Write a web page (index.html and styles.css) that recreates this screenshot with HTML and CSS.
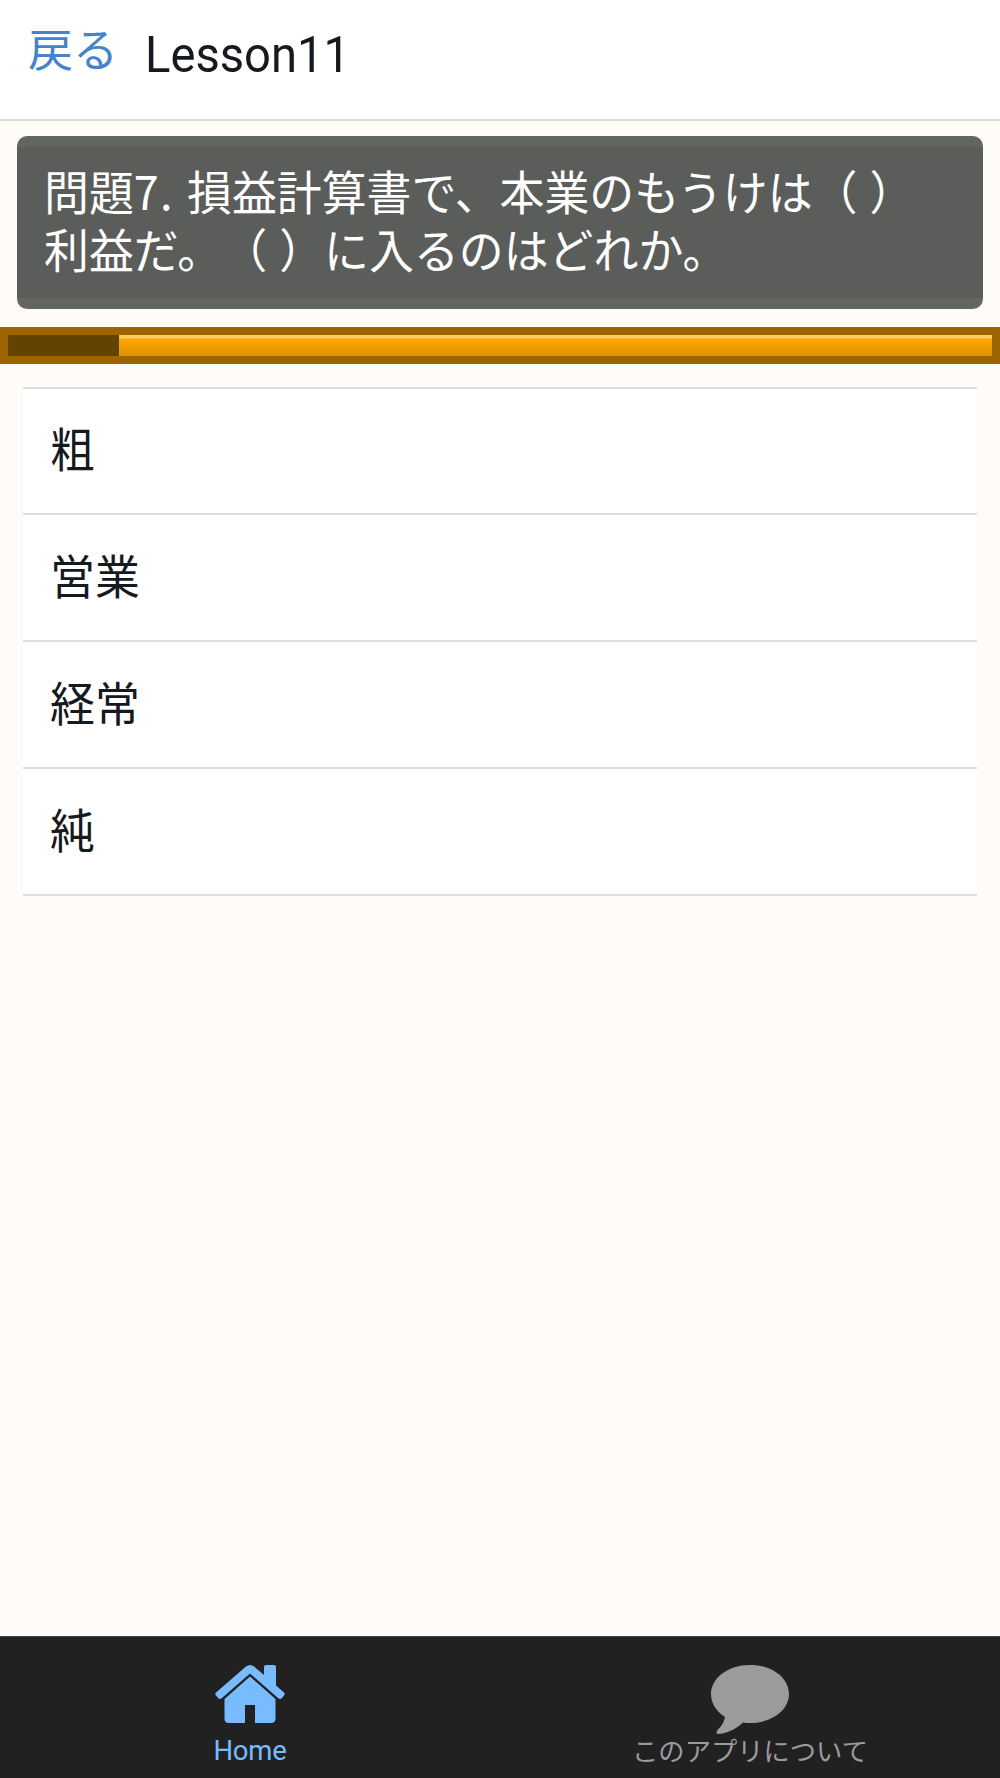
FILE: index.html
```
<!DOCTYPE html>
<html lang="ja">
<head>
<meta charset="utf-8">
<title>Lesson11</title>
<link rel="stylesheet" href="styles.css">
</head>
<body>
<header class="header">
  <a class="back">戻る</a>
  <h1 class="title">Lesson11</h1>
</header>
<main class="main">
  <section class="question">
    <p class="question-text">問題<span class="number">7. </span>損益計算書で、本業のもうけは（ ）<br>利益だ。（ ）に入るのはどれか。</p>
  </section>
  <div class="progress"><div class="track"><div class="elapsed"></div><div class="remaining"></div></div></div>
  <ul class="answers">
    <li class="answer"><span>粗</span></li>
    <li class="answer"><span>営業</span></li>
    <li class="answer"><span>経常</span></li>
    <li class="answer"><span>純</span></li>
  </ul>
</main>
<nav class="tabs">
  <a class="tab active">
    <svg class="icon" viewBox="0 0 70 70" width="70" height="70">
      <path d="M1 27.500 L31 1.500 Q35 -1.500 39 1.500 L49 10 V2 Q49 0 51 0 H59 Q61 0 61 2 V20.500 L69 27.500 Q70.500 29 69 30.500 L67 33 Q65 35 63 33 L35 8.500 L7 33 Q5 35 3 33 L1 30.500 Q-.5 29 1 27.500 Z"/>
      <path d="M35 11.500 L60.500 34 V53.500 Q60.500 58 56 58 H40 V40 H30 V58 H14 Q9.500 58 9.500 53.500 V34 Z"/>
    </svg>
    <span class="label label-home">Home</span>
  </a>
  <a class="tab">
    <svg class="icon" viewBox="0 0 80 70" width="80" height="70">
      <path d="M40 0 C62 0 79 13 79 29 C79 45 62 58 40 58 Q36 58 33 57.500 C25 65 15 69 8 69 Q5 68 8 64.500 C13 60 14 56 15 52 C6 46 1 38 1 29 C1 13 18 0 40 0 Z"/>
    </svg>
    <span class="label">このアプリについて</span>
  </a>
</nav>
</body>
</html>
```
FILE: styles.css
```
* { box-sizing: border-box; }
body {
  margin: 0;
  height: 1778px;
  display: flex;
  flex-direction: column;
  background: #fffcf7;
  color: #16191d;
  font-family: "Noto Sans CJK JP", sans-serif;
}
.header {
  height: 121px;
  display: flex;
  align-items: flex-start;
  padding-left: 28px;
  background: #fff;
  border-bottom: 2px solid #dcdddb;
}
.back {
  width: 117px;
  padding-top: 18px;
  color: #4583cd;
  font-size: 45px;
  line-height: 60px;
}
.title {
  margin: 0;
  padding-top: 25px;
  font: 400 50px/60px Roboto, sans-serif;
  transform: scaleX(.943);
  transform-origin: left;
}
.main { flex: 1; padding-top: 15px; }
.question {
  margin: 0 17px;
  height: 173px;
  padding: 25px 0 0 27px;
  border-radius: 10px;
  color: #fff;
  background: linear-gradient(#636561 11px, #5b5d5a 11px 162px, #636561 162px);
}
.question-text {
  margin: 0;
  width: 950px;
  font-size: 46.400px;
  line-height: 58px;
  white-space: nowrap;
  word-spacing: 2px;
  text-spacing-trim: space-all;
  transform: scaleX(.968);
  transform-origin: left;
}
.number { letter-spacing: 1.300px; }
.progress {
  height: 37px;
  margin-top: 18px;
  padding: 8px;
  background: #9c6500;
}
.track { display: flex; height: 21px; }
.elapsed { width: 111px; background: #644200; }
.remaining { flex: 1; background: linear-gradient(#ffcb62 3px, #ffa700 4px, #dd9200); }
.answers {
  list-style: none;
  margin: 23px 23px 0;
  padding: 0;
  border-top: 2px solid #dddedd;
}
.answer {
  height: 127px;
  padding: 26px 0 0 27px;
  font-size: 46.400px;
  line-height: 66px;
  background: #fff;
  border-bottom: 2px solid #dddedd;
}
.answer:first-child { height: 126px; padding-top: 25px; }
.answer span { display: inline-block; transform: scaleX(.968); transform-origin: left; }
.tabs {
  height: 142px;
  display: flex;
  background: #212121;
  border-top: 1px solid #444;
}
.tab {
  flex: 1;
  display: flex;
  flex-direction: column;
  align-items: center;
  padding-top: 28px;
  color: #9c9a9d;
}
.active { color: #78bbff; }
.icon { display: block; fill: currentColor; }
.label { font-size: 26.300px; line-height: 36px; margin-top: -3px; white-space: nowrap; }
.label-home { margin-top: -2px; font-family: Roboto, sans-serif; font-size: 27.500px; letter-spacing: -.2px; }
```
